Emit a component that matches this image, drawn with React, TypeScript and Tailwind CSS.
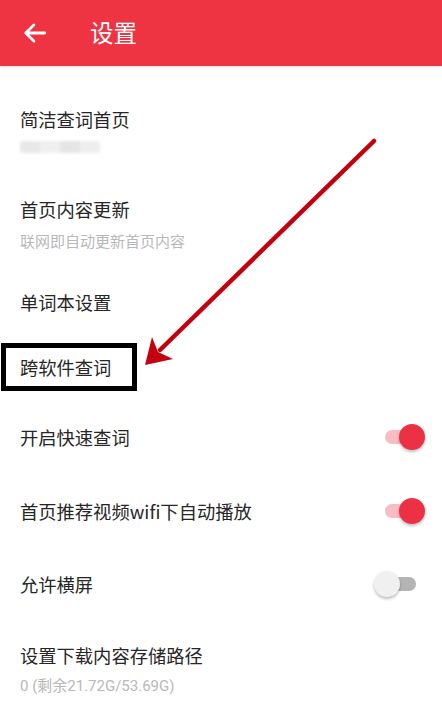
import React from 'react';

const cjk = { fontFamily: '"Noto Sans CJK SC", "Noto Sans", sans-serif' };
const latin = { fontFamily: 'Roboto, "Noto Sans CJK SC", sans-serif' };

interface ToggleProps {
  on: boolean;
}

const Toggle: React.FC<ToggleProps> = ({ on }) => (
  <div className="relative w-[40px] h-[26px] flex items-center">
    <div
      className={`w-[31px] h-[14px] rounded-full ${
        on ? 'bg-[#f8bdc4]' : 'bg-[#b4b4b4]'
      }`}
    />
    <div
      className={`absolute top-0 w-[26px] h-[26px] rounded-full shadow-[0_2px_3px_rgba(0,0,0,0.25)] ${
        on ? 'right-0 bg-[#ec3145]' : 'left-[-11px] bg-[#f0f0f0]'
      }`}
    />
  </div>
);

interface RowProps {
  title: string;
  sub?: React.ReactNode;
  subGap?: string;
  toggle?: boolean;
  pad: string;
  children?: React.ReactNode;
}

const Row: React.FC<RowProps> = ({ title, sub, subGap = 'mt-[11px]', toggle, pad, children }) => (
  <div className={`relative flex items-center justify-between pl-5 pr-[17px] ${pad}`}>
    <div className="flex flex-col">
      <div className="text-[18.3px] leading-[24px] text-[#262626]">{title}</div>
      {sub && (
        <div className={`${subGap} text-[15px] leading-[20px] text-[#b8b8b8]`} style={latin}>
          {sub}
        </div>
      )}
    </div>
    {toggle !== undefined && <Toggle on={toggle} />}
    {children}
  </div>
);

export default function App() {
  return (
    <div className="relative w-[442px] h-[710px] overflow-hidden bg-white" style={cjk}>
      <div className="flex items-center h-[66px] bg-[#ee3343] shadow-[0_1px_2px_rgba(0,0,0,0.15)]">
        <svg
          className="ml-[22px] w-[26px] h-[26px]"
          viewBox="0 0 24 24"
          fill="none"
          stroke="white"
          strokeWidth={2.6}
          strokeLinecap="round"
          strokeLinejoin="round"
        >
          <path d="M21 12H3.5M11 4.5 3.5 12l7.5 7.5" />
        </svg>
        <div className="ml-[42px] text-[23.5px] text-white">设置</div>
      </div>

      <Row
        title="简洁查词首页"
        pad="pt-[41px] pb-[21px]"
        subGap="mt-1.5"
        sub={
          <div className="mt-[4px] flex h-[12px] w-[80px] rounded-[3px] overflow-hidden blur-[1.5px]">
            <div className="w-[20px] bg-[#e8e8e8]" />
            <div className="w-[20px] bg-[#efefef]" />
            <div className="w-[20px] bg-[#e5e5e5]" />
            <div className="w-[20px] bg-[#eeeeee]" />
          </div>
        }
      />
      <Row title="首页内容更新" sub="联网即自动更新首页内容" pad="pt-[23px] pb-[16px]" />
      <Row title="单词本设置" pad="pt-[22px] pb-[21px]" />
      <Row title="跨软件查词" pad="pt-[20px] pb-[22px]">
        <div className="absolute left-[1px] top-[8px] w-[136px] h-[48px] border-[5px] border-black" />
      </Row>
      <Row title="开启快速查词" toggle={true} pad="pt-[23px] pb-[24px]" />
      <Row title="首页推荐视频wifi下自动播放" toggle={true} pad="py-[24px]" />
      <Row title="允许横屏" toggle={false} pad="pt-[23px] pb-[24px]" />
      <Row title="设置下载内容存储路径" sub="0 (剩余21.72G/53.69G)" subGap="mt-[9px]" pad="pt-[22px] pb-[20px]" />

      <svg className="absolute left-0 top-0 w-[442px] h-[710px] pointer-events-none" viewBox="0 0 442 710">
        <line x1="374" y1="141" x2="160" y2="350" stroke="#c4000e" strokeWidth="4.5" strokeLinecap="round" />
        <polygon points="145,365 152,337 158,352 173,359" fill="#c4000e" />
      </svg>
    </div>
  );
}
